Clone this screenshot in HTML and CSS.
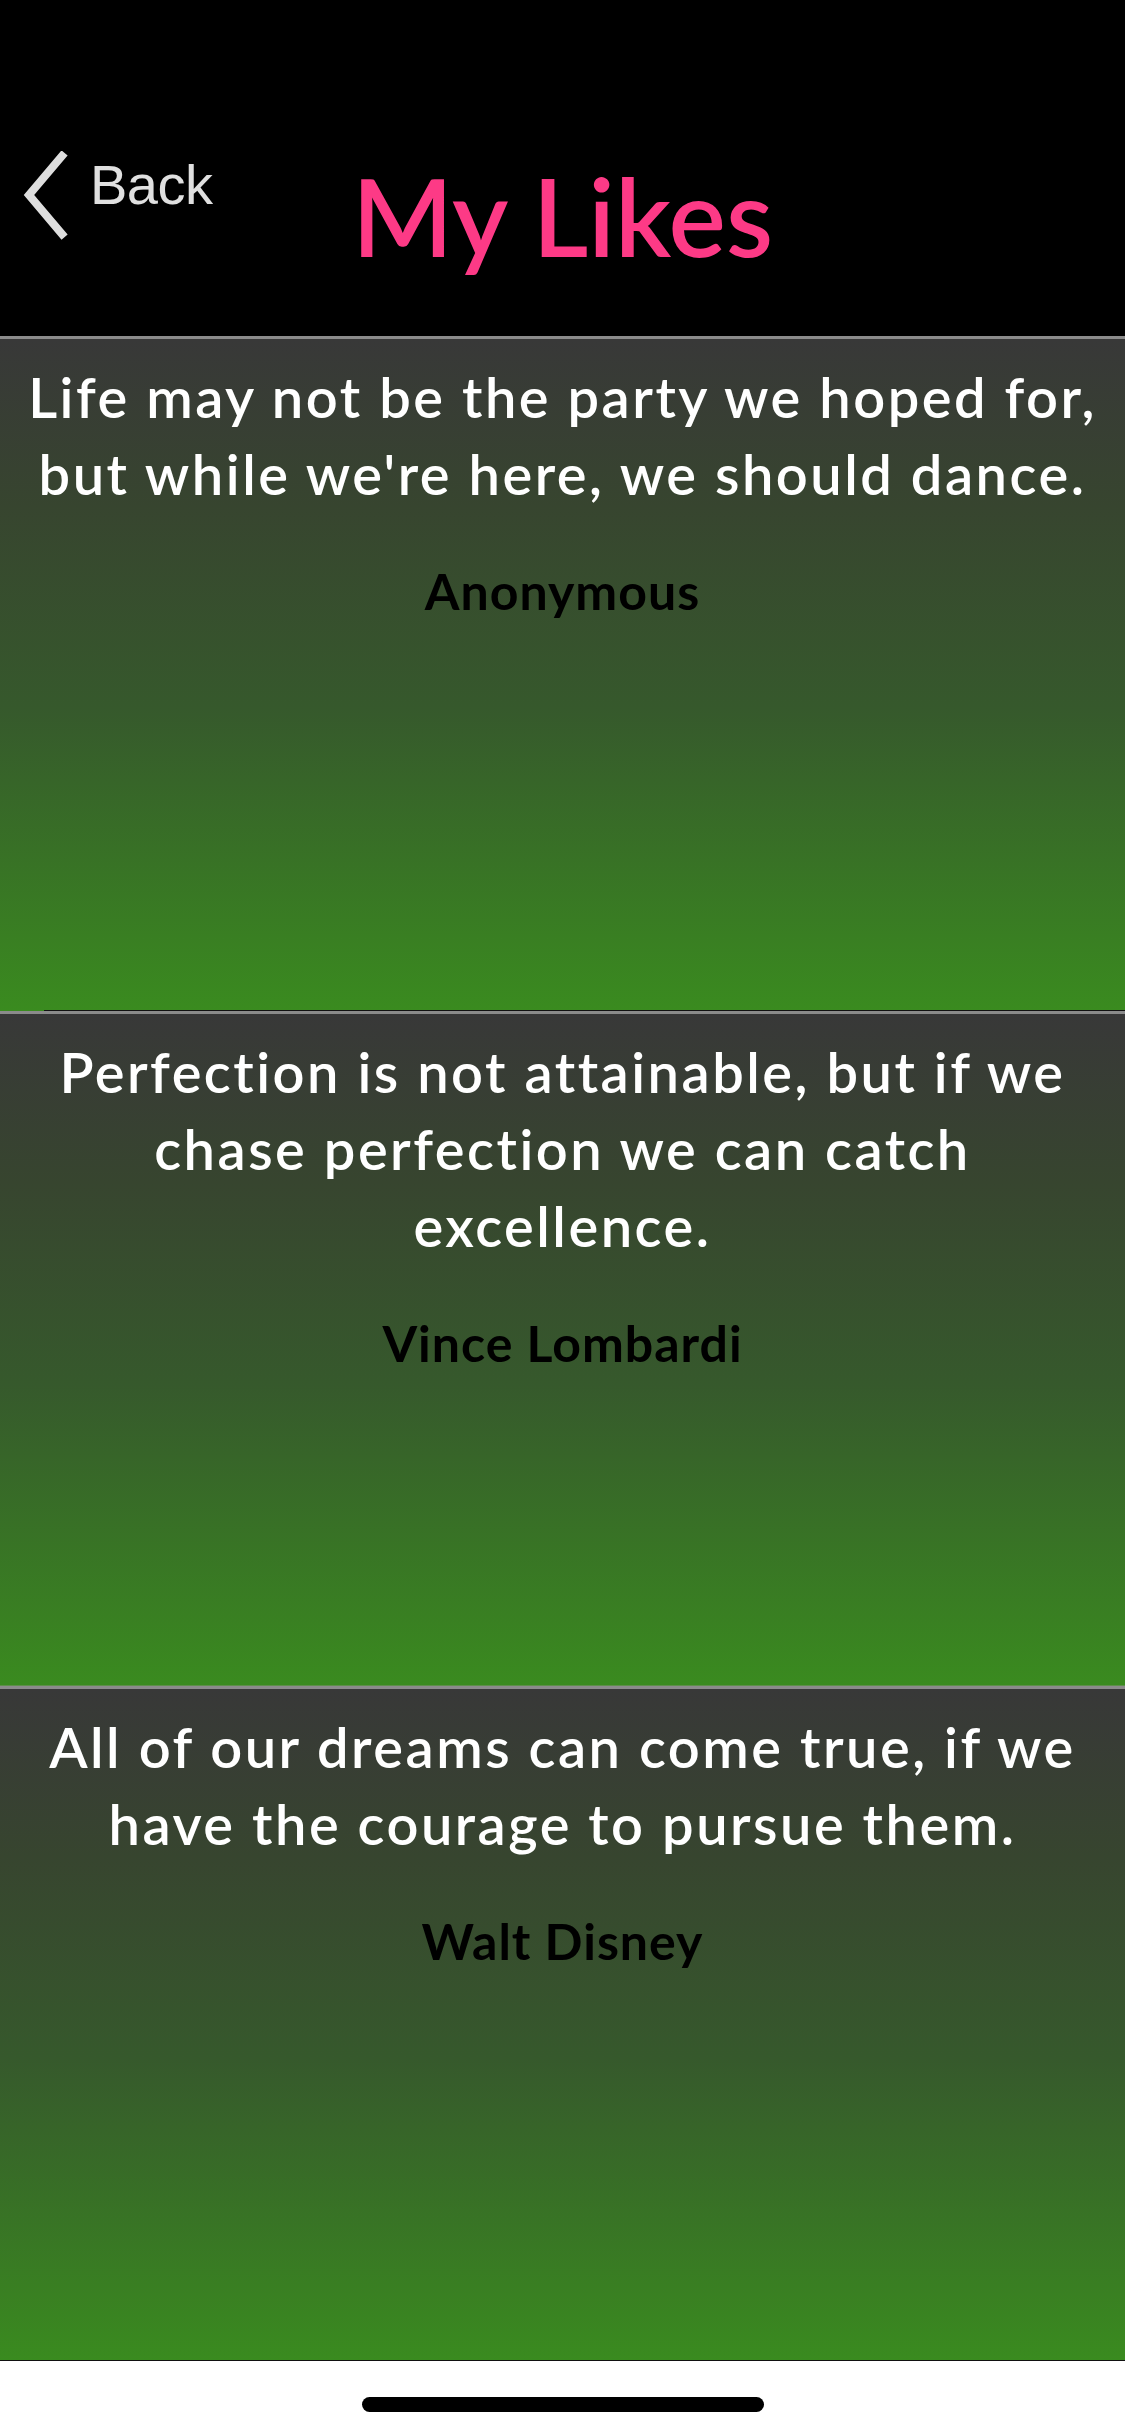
FILE: index.html
```html
<!DOCTYPE html>
<html lang="en">
<head>
<meta charset="utf-8">
<title>My Likes</title>
<link rel="stylesheet" href="styles.css">
</head>
<body>
<div class="screen">
  <header class="navbar">
    <a class="back" href="#">
      <svg class="chevron" width="50" height="90" viewBox="0 0 50 90" aria-hidden="true">
        <polyline points="42,5 9,44 42,83" fill="none" stroke="#dedede" stroke-width="8" stroke-linecap="square" stroke-linejoin="miter"/>
      </svg>
      <span class="back-label">Back</span>
    </a>
    <h1 class="title">My Likes</h1>
  </header>

  <main class="list">
    <section class="cell cell-inset">
      <p class="quote">Life may not be the party we hoped for,<br>but while we're here, we should dance.</p>
      <p class="author">Anonymous</p>
    </section>
    <section class="cell cell-plain">
      <p class="quote">Perfection is not attainable, but if we<br>chase perfection we can catch<br>excellence.</p>
      <p class="author">Vince Lombardi</p>
    </section>
    <section class="cell cell-full">
      <p class="quote">All of our dreams can come true, if we<br>have the courage to pursue them.</p>
      <p class="author">Walt Disney</p>
    </section>
  </main>

  <footer class="home-area">
    <div class="home-indicator"></div>
  </footer>
</div>
</body>
</html>
```

FILE: styles.css
```css
* { box-sizing: border-box; }

html, body {
  margin: 0;
  padding: 0;
  background: #ffffff;
}

.screen {
  width: 1125px;
  height: 2436px;
  display: flex;
  flex-direction: column;
  overflow: hidden;
}

/* ---------- Navigation bar ---------- */
.navbar {
  height: 336px;
  background: #000000;
  position: relative;
  flex: none;
}

.back {
  position: absolute;
  left: 20px;
  top: 151px;
  display: flex;
  align-items: flex-start;
  text-decoration: none;
}

.chevron {
  display: block;
}

.back-label {
  margin-left: 20px;
  margin-top: 2px;
  font-family: "Liberation Sans", Arial, sans-serif;
  font-size: 56px;
  line-height: 64px;
  color: #e0e0e0;
  letter-spacing: -0.5px;
}

.title {
  margin: 0;
  padding-top: 160px;
  text-align: center;
  font-family: "Lato", "Noto Sans", sans-serif;
  font-weight: 600;
  font-size: 108px;
  line-height: 110px;
  color: #fd3a86;
}

/* ---------- Cells ---------- */
.list {
  flex: none;
  display: flex;
  flex-direction: column;
}

.cell {
  height: 675px;
  border-top: 3px solid #8b8b8b;
  background: linear-gradient(to bottom, #383838 0%, #37452f 25%, #36592c 55%, #3a8b1f 100%);
  display: flex;
  flex-direction: column;
  align-items: center;
  padding-top: 19px;
  position: relative;
}

.cell::after {
  content: "";
  position: absolute;
  bottom: 0;
  right: 0;
  height: 1px;
  background: #111111;
}

.cell-inset::after { left: 44px; }
.cell-plain::after { left: 0; background: #5e8f4a; }
.cell-full::after { left: 0; }

.quote {
  margin: 0;
  text-align: center;
  font-family: "Lato", "Noto Sans", sans-serif;
  font-weight: 600;
  font-size: 56px;
  line-height: 77px;
  letter-spacing: 2.5px;
  color: #ffffff;
}

.author {
  margin: 49px 0 0;
  text-align: center;
  font-family: "Lato", "Noto Sans", sans-serif;
  font-weight: 700;
  font-size: 50px;
  line-height: 60px;
  letter-spacing: 1px;
  color: #000000;
}

/* ---------- Home indicator ---------- */
.home-area {
  flex: 1;
  background: #ffffff;
  display: flex;
  justify-content: center;
  padding-top: 36px;
}

.home-indicator {
  width: 402px;
  height: 15px;
  border-radius: 8px;
  background: #000000;
}
```
